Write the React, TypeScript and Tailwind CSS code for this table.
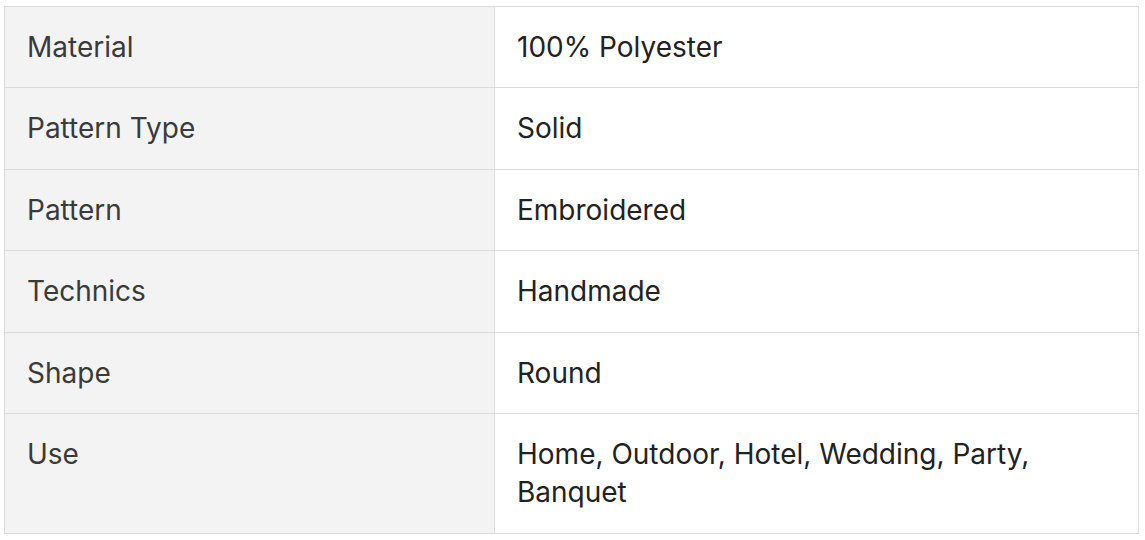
const ROWS: { label: string; value: string }[] = [
  { label: "Material", value: "100% Polyester" },
  { label: "Pattern Type", value: "Solid" },
  { label: "Pattern", value: "Embroidered" },
  { label: "Technics", value: "Handmade" },
  { label: "Shape", value: "Round" },
  { label: "Use", value: "Home, Outdoor, Hotel, Wedding, Party, Banquet" },
];

export default function App() {
  return (
    <div className="w-full min-h-screen bg-white pl-[4px] pr-[6px] pt-[6px] pb-[6px] font-['Inter',sans-serif]">
      <table className="w-full border-collapse border border-[#dcdcdc] text-[28px] leading-[38.4px]">
        <tbody>
          {ROWS.map((row) => (
            <tr key={row.label} className="border-b border-[#dcdcdc]">
              <td className="w-[490px] bg-[#f3f3f3] border-r border-[#dcdcdc] px-[22px] py-[21px] align-top text-[#3a3a3a] font-normal">
                {row.label}
              </td>
              <td className="px-[22px] py-[21px] align-top text-[#222222] font-normal">
                {row.value}
              </td>
            </tr>
          ))}
        </tbody>
      </table>
    </div>
  );
}
